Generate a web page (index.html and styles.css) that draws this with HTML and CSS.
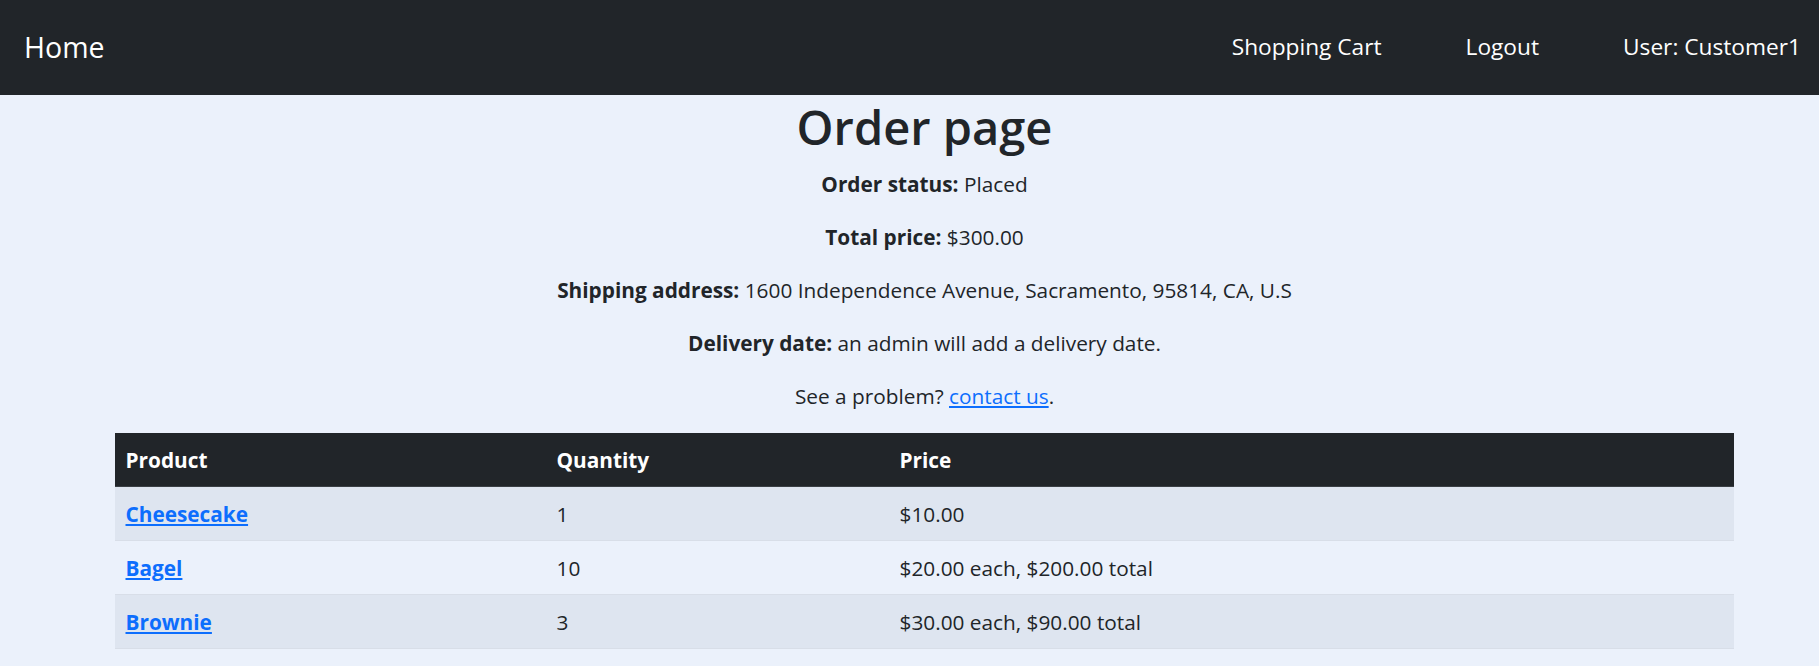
FILE: index.html
```html
<!DOCTYPE html>
<html lang="en">
<head>
<meta charset="utf-8">
<title>Order page</title>
<link rel="stylesheet" href="styles.css">
</head>
<body>
<nav class="navbar">
  <a class="brand" href="#">Home</a>
  <div class="nav-links">
    <a class="nav-link" href="#">Shopping Cart</a>
    <a class="nav-link" href="#">Logout</a>
    <span class="nav-link">User: Customer1</span>
  </div>
</nav>
<main class="container">
  <h1 class="title">Order page</h1>
  <p><b>Order status:</b> Placed</p>
  <p><b>Total price:</b> $300.00</p>
  <p><b>Shipping address:</b> 1600 Independence Avenue, Sacramento, 95814, CA, U.S</p>
  <p><b>Delivery date:</b> an admin will add a delivery date.</p>
  <p>See a problem? <a class="link" href="#">contact us</a>.</p>
  <table class="orders">
    <thead>
      <tr><th class="c1">Product</th><th class="c2">Quantity</th><th class="c3">Price</th></tr>
    </thead>
    <tbody>
      <tr><td><a class="product" href="#">Cheesecake</a></td><td>1</td><td>$10.00</td></tr>
      <tr><td><a class="product" href="#">Bagel</a></td><td>10</td><td>$20.00 each, $200.00 total</td></tr>
      <tr><td><a class="product" href="#">Brownie</a></td><td>3</td><td>$30.00 each, $90.00 total</td></tr>
    </tbody>
  </table>
</main>
</body>
</html>
```
FILE: styles.css
```css
* { box-sizing: border-box; }
html, body { margin: 0; padding: 0; }
body {
  background: #ebf1fb;
  color: #212529;
  font-family: "Open Sans", "Noto Sans", sans-serif;
  font-size: 20.8px;
  line-height: 1.5;
}
.navbar {
  height: 95px;
  background: #212529;
  display: flex;
  align-items: center;
  justify-content: space-between;
  padding: 0 18px 0 24px;
}
.brand {
  color: #fff;
  text-decoration: none;
  font-size: 28.5px;
}
.nav-links {
  display: flex;
  align-items: center;
  gap: 84px;
}
.nav-link {
  color: #fff;
  text-decoration: none;
  font-size: 22.7px;
}
.container {
  width: 1619px;
  margin-left: 115px;
  text-align: center;
}
.title {
  margin: 0 0 9px;
  font-size: 47px;
  font-weight: 600;
  line-height: 64px;
}
p {
  margin: 0 0 21px;
  line-height: 32px;
}
b { font-weight: 700; }
.link { color: #0d6efd; }
.orders {
  width: 100%;
  border-collapse: collapse;
  text-align: left;
}
.orders th, .orders td {
  padding: 10.5px 10.5px;
  line-height: 32px;
  border-bottom: 1px solid #d8dee8;
}
.orders th {
  background: #212529;
  color: #fff;
  font-weight: 700;
  border-bottom-color: #3a3f44;
}
.c1 { width: 431px; }
.c2 { width: 343px; }
.orders tbody tr:nth-child(odd) td { background: #dee5f0; }
.product {
  color: #0d6efd;
  font-weight: 700;
}
```
